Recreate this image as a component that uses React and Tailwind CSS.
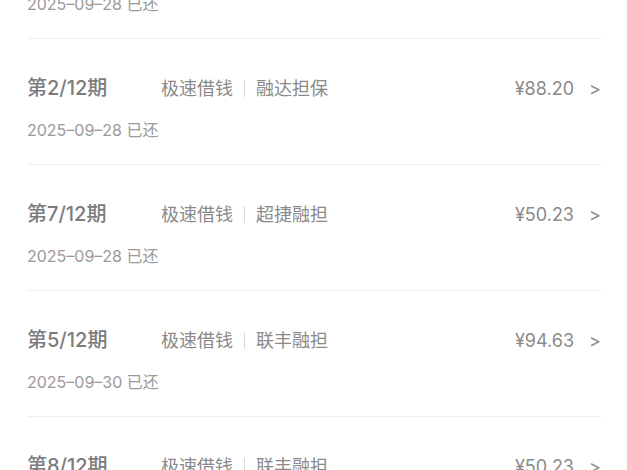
import React from 'react';

const items = [
    { qi: '第2/12期', product: '极速借钱', guarantor: '融达担保', amount: '¥88.20', date: '2025-09-28' },
    { qi: '第7/12期', product: '极速借钱', guarantor: '超捷融担', amount: '¥50.23', date: '2025-09-28' },
    { qi: '第5/12期', product: '极速借钱', guarantor: '联丰融担', amount: '¥94.63', date: '2025-09-30' },
    { qi: '第8/12期', product: '极速借钱', guarantor: '联丰融担', amount: '¥50.23', date: '2025-09-30' },
];

function Row({ item }) {
    return (
        <div className="border-b border-[#efefef] pt-[35px] pb-[24px]">
            <div className="flex items-center h-[28px]">
                <div className="w-[134px] text-[20px] font-medium text-[#7c7c7c]">{item.qi}</div>
                <div className="flex-1 flex items-center text-[18px] text-[#8a8a8a]">
                    <span>{item.product}</span>
                    <span className="mx-[11px] w-px h-[17px] bg-[#d9d9d9]"></span>
                    <span>{item.guarantor}</span>
                </div>
                <div className="text-[18px] text-[#8a8a8a]">{item.amount}</div>
                <div className="ml-[15px] w-[12px] text-[18px] text-[#8a8a8a] text-right">&gt;</div>
            </div>
            <div className="mt-[18px] h-[20px] leading-[20px] text-[16px] text-[#9a9a9a]">
                {item.date.replace(/-/g, '–')} 已还
            </div>
        </div>
    );
}

export default function App() {
    return (
        <div className="w-[627px] h-[470px] overflow-hidden bg-white" style={{ fontFamily: 'Inter, "Noto Sans CJK SC", sans-serif' }}>
            <div className="ml-[27px] mr-[26px] -mt-[6px]">
                <div className="border-b border-[#efefef] pb-[24px]">
                    <div className="h-[20px] leading-[20px] text-[16px] text-[#9a9a9a]">2025–09–28 已还</div>
                </div>
                {items.map(item => <Row key={item.qi} item={item} />)}
            </div>
        </div>
    );
}
